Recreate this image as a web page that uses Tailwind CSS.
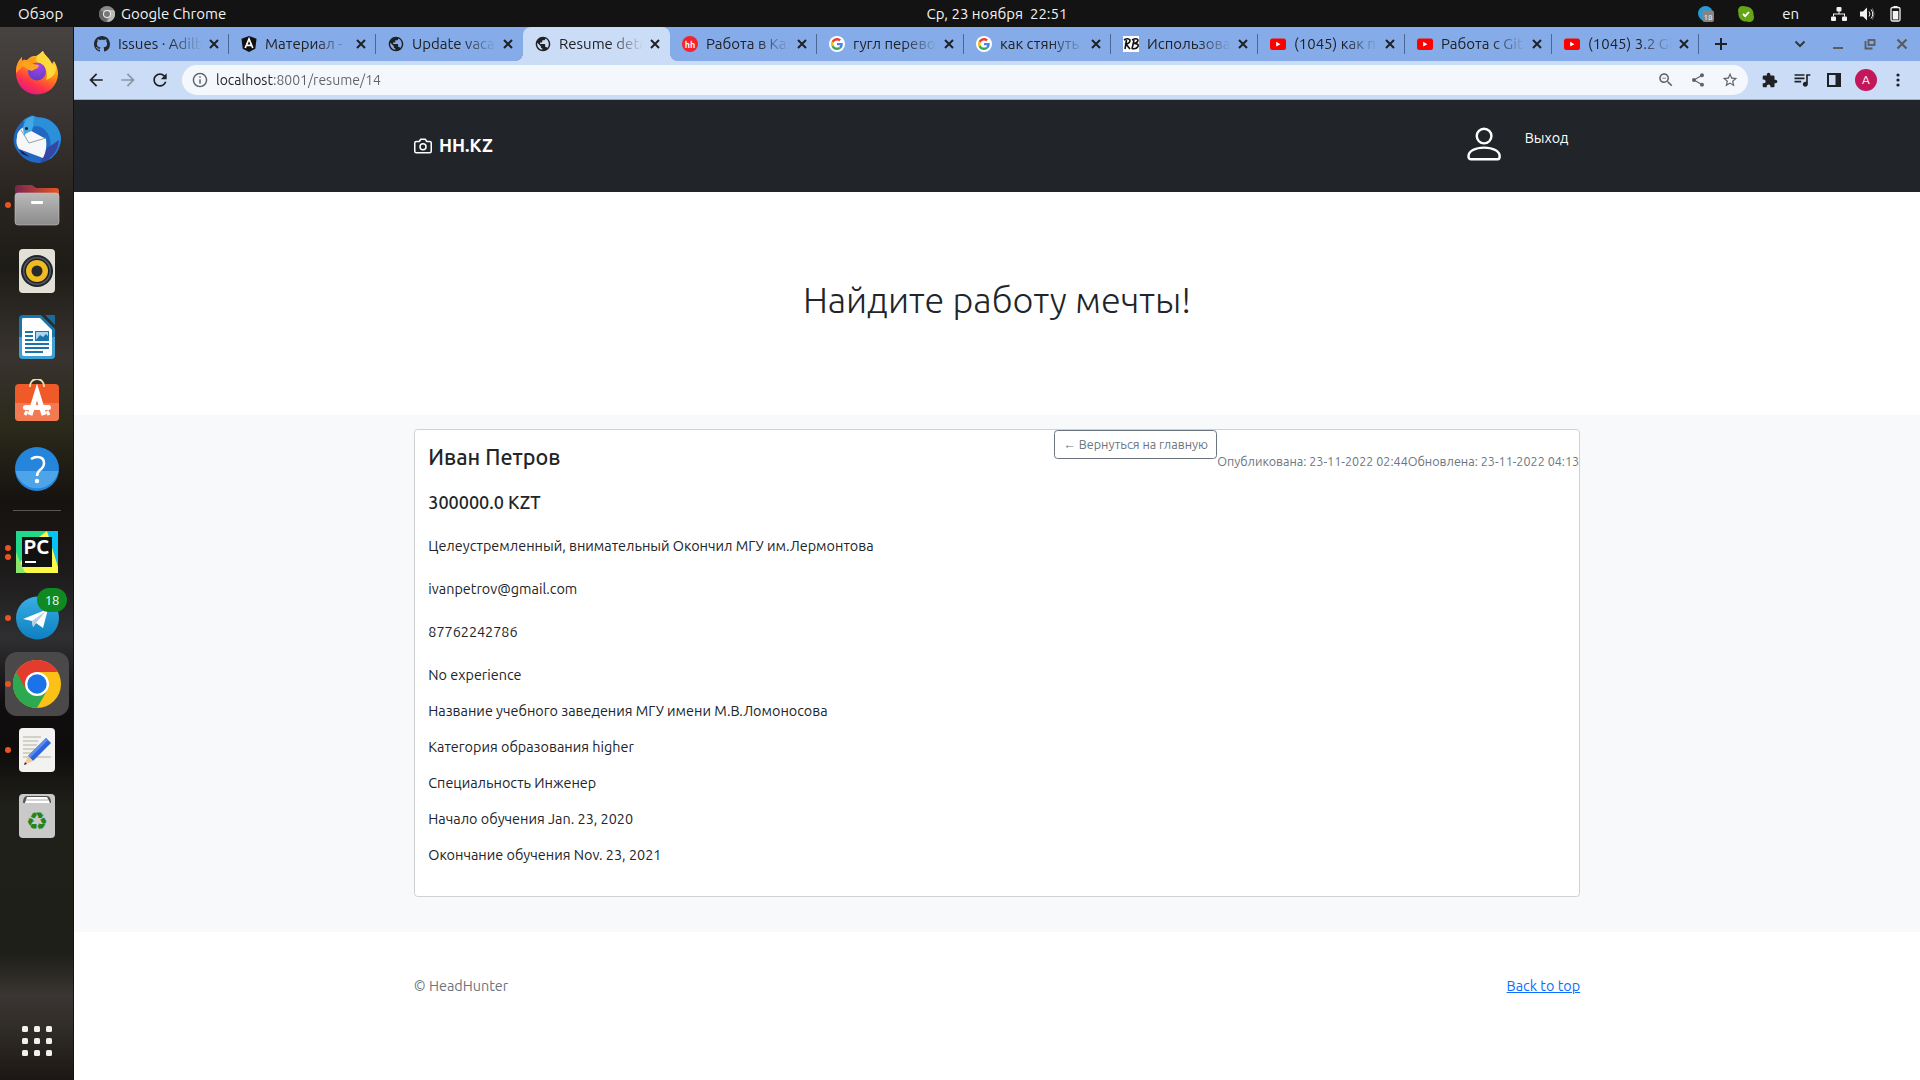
<!DOCTYPE html>
<html lang="ru">
<head>
<meta charset="utf-8">
<title>Resume detail</title>
<script src="https://cdn.jsdelivr.net/npm/@tailwindcss/browser@4"></script>
</head>
<body class="min-h-screen flex flex-col bg-white text-[#212529] text-sm font-['Ubuntu','Noto_Sans',sans-serif]">

<!-- Shared icon symbols -->
<svg class="hidden" aria-hidden="true">
  <symbol id="x" viewBox="0 0 16 16"><path d="M4 4l8 8M12 4l-8 8" stroke="currentColor" stroke-width="2" fill="none"/></symbol>
  <symbol id="globe" viewBox="1 1 22 22"><path fill="#202124" d="M12 2C6.480 2 2 6.480 2 12s4.480 10 10 10 10-4.480 10-10S17.520 2 12 2zm-1 17.930c-3.950-.490-7-3.850-7-7.930 0-.620.080-1.210.210-1.790L9 15v1c0 1.100.900 2 2 2v1.930zm6.900-2.540c-.260-.810-1-1.390-1.900-1.390h-1v-3c0-.550-.450-1-1-1H8v-2h2c.550 0 1-.450 1-1V7h2c1.100 0 2-.900 2-2v-.410c2.930 1.190 5 4.060 5 7.410 0 2.080-.800 3.970-2.100 5.390z"/></symbol>
  <symbol id="google" viewBox="0 0 16 16"><circle cx="8" cy="8" r="8" fill="#fff"/><g transform="translate(2 2) scale(.25)"><path fill="#EA4335" d="M24 9.500c3.540 0 6.710 1.220 9.210 3.600l6.850-6.850C35.900 2.380 30.470 0 24 0 14.620 0 6.510 5.380 2.560 13.220l7.980 6.190C12.430 13.720 17.740 9.500 24 9.500z"/><path fill="#4285F4" d="M46.980 24.550c0-1.570-.150-3.090-.380-4.550H24v9.020h12.940c-.580 2.960-2.260 5.480-4.780 7.180l7.730 6c4.510-4.180 7.090-10.360 7.090-17.650z"/><path fill="#FBBC05" d="M10.530 28.590c-.480-1.450-.760-2.990-.760-4.590s.270-3.140.760-4.590l-7.980-6.190C.920 16.460 0 20.120 0 24c0 3.880.920 7.540 2.560 10.780l7.970-6.190z"/><path fill="#34A853" d="M24 48c6.480 0 11.930-2.130 15.890-5.810l-7.730-6c-2.150 1.450-4.920 2.300-8.160 2.300-6.260 0-11.570-4.220-13.470-9.910l-7.980 6.190C6.510 42.620 14.620 48 24 48z"/></g></symbol>
  <symbol id="youtube" viewBox="0 0 16 16"><rect y="2.500" width="16" height="11.500" rx="2.500" fill="#f00"/><path d="M6.200 5.800v4.800l4.200-2.400z" fill="#fff"/></symbol>
</svg>

<!-- Desktop top bar -->
<header class="h-[27px] shrink-0 bg-[#131313] text-[#f2f2f2] text-[15px] leading-5 flex items-center">
  <button class="w-[74px] shrink-0 pl-[18px] text-left">Обзор</button>
  <div class="flex-1 grid grid-cols-[1fr_auto_1fr] items-center">
    <button class="flex items-center gap-1.5 pl-[25px]">
      <svg class="size-4" viewBox="0 0 16 16"><circle cx="8" cy="8" r="8" fill="#8a8a8a"/><path d="M8 8L1 4A8 8 0 0 0 7.500 16z" fill="#666"/><path d="M8 4h7A8 8 0 0 1 8 16L12 9z" fill="#b9b9b9"/><circle cx="8" cy="8" r="4" fill="#eee"/><circle cx="8" cy="8" r="3" fill="#777"/></svg>
      Google Chrome
    </button>
    <time>Ср, 23 ноября&nbsp; 22:51</time>
    <div class="flex items-center justify-end pr-[17px]">
      <svg class="size-4" viewBox="0 0 16 16"><circle cx="7.500" cy="7.500" r="7.500" fill="#2a9ad6"/><rect x="4.500" y="4.500" width="11.500" height="11.500" rx="2" fill="#858585"/><text x="5.500" y="13.500" font-size="8" fill="#fff">18</text></svg>
      <svg class="size-4 ml-6" viewBox="0 0 16 16"><path d="M4.500 0Q7 0 8 .5A7.500 7.500 0 0 1 15.500 9Q16 10 16 11.500A4.500 4.500 0 0 1 11.500 16Q10 16 9 15.500A7.500 7.500 0 0 1 .5 7Q0 6 0 4.500A4.500 4.500 0 0 1 4.500 0z" fill="#65a617"/><path d="M5 8l2.200 2.200L11 6" stroke="#fff" stroke-width="1.800" fill="none"/></svg>
      <button class="ml-7">en</button>
      <svg class="size-4 ml-8" viewBox="0 0 16 16" fill="#f2f2f2"><rect x="5.500" y="1" width="5" height="4.500" rx="1"/><rect x="0" y="10.500" width="5" height="4.500" rx="1"/><rect x="11" y="10.500" width="5" height="4.500" rx="1"/><path d="M7.500 5v2.500h-5.500v3h1v-2h10v2h1v-3h-5.500v-2.500z"/></svg>
      <svg class="size-4 ml-3" viewBox="0 0 16 16"><path d="M1 5.500h3l4-4v13l-4-4h-3z" fill="#f2f2f2"/><path d="M10 5.500q2 2.500 0 5M12 3.500q3.500 4.500 0 9" stroke="#f2f2f2" fill="none"/><path d="M13.500 2.500q3 5.500 0 11" stroke="#777" fill="none"/></svg>
      <svg class="size-4 ml-3" viewBox="0 0 16 16"><rect x="4" y="1.500" width="9" height="13.500" rx="1.500" fill="none" stroke="#f2f2f2" stroke-width="1.300"/><path d="M6.500 0h4v2h-4zM5.700 5h5.600v8.500H5.700z" fill="#f2f2f2"/></svg>
    </div>
  </div>
</header>

<div class="flex-1 flex">

<!-- Dock -->
<nav aria-label="Dock" class="w-[74px] shrink-0 flex flex-col items-center pt-[13px] pb-[6px] border-r border-[#15120f] bg-[linear-gradient(to_bottom,#474341_0%,#3b3633_8%,#29241f_16%,#1e1c17_23%,#38332f_31%,#2b2a1b_38%,#16120f_45%,#1d1b1b_52%,#2f2f32_58%,#100e0e_64%,#0f0d0c_69%,#20201a_74%,#1f1f19_88%,#3a3533_92%,#302c28_95%,#1c1714_100%)]">
  <button aria-label="Firefox" class="w-full h-[66px] flex items-center justify-center"><svg class="size-12" viewBox="0 2 48 48"><defs><linearGradient id="ff" x1=".8" y1="0" x2=".3" y2="1"><stop offset="0" stop-color="#fff44f"/><stop offset=".4" stop-color="#ff980e"/><stop offset=".75" stop-color="#ff3647"/><stop offset="1" stop-color="#e31587"/></linearGradient><radialGradient id="fp" cx=".6" cy=".2" r=".9"><stop offset="0" stop-color="#a641f0"/><stop offset="1" stop-color="#5a3fc0"/></radialGradient></defs><path d="M30 4c1 4 7 8 9 13l2-3c3 5 4 9 4 13A21 21 0 0 1 3 26c0-6 1-11 6-16v4c2-2 3-1 5-1 4-4 6-4 9-4 2-1 5-3 7-5z" fill="url(#ff)"/><path d="M9 10C4 15 3 20 3 26l6-6 12-3 2-8-9 4c-2 0-3-1-5 1z" fill="#ff9a1c"/><path d="M30 4c-6 4-7 8-6 11 8 3 12 11 9 18 7-2 12-8 9-16-1 2-2 1-3 0-2-6-8-9-9-13z" fill="#ffd93b"/><circle cx="24" cy="24.500" r="9" fill="url(#fp)"/><path d="M8 17c4-4 8-2 12 0l6 1c0 4-5 4-7 6-4-1-6-3-11-7z" fill="#ffa41c"/></svg></button>
  <button aria-label="Thunderbird" class="w-full h-[66px] flex items-center justify-center"><svg class="size-12" viewBox="0 0 48 48"><path d="M17 1c3-1 5 0 7 1 12-1 24 9 24 22 0 10-6 19-15 22l-6 2c-12 0-19-6-24-14C-3 23 3 8 17 1z" fill="#2068c0"/><path d="M28 3c10 0 20 10 20 21-2 8-5 16-11 20 0-10 2-18-2-25s-10-9-17-7l-8-6c4-5 10-5 18-3z" fill="#2b8fda"/><path d="M33 34l13-9c-1 12-8 20-19 23z" fill="#3546a5"/><path d="M4 22c0-5 3-8 7-10l22 12c1 7 0 13-3 19L6 34C3 30 3 26 4 22z" fill="#f6f7f9"/><path d="M8 15l8 13 17-5" stroke="#9aa0a6" fill="none"/><path d="M6 34l11 8-8-3z" fill="#231a52"/><path d="M10 13c1-7 5-12 11-12-1 8 0 10-2 14-2 3-5 1-8 6z" fill="#42a9e4"/><circle cx="13.500" cy="13.500" r="1.500" fill="#123"/></svg></button>
  <button aria-label="Files" class="relative w-full h-[66px] flex items-center justify-center"><i class="absolute left-[5px] size-1.5 rounded-full bg-[#e95420]"></i><svg class="size-12" viewBox="0 0 48 48"><defs><linearGradient id="fo"><stop stop-color="#77264f"/><stop offset="1" stop-color="#e95420"/></linearGradient><linearGradient id="fg" x2="0" y2="1"><stop stop-color="#b9b9b9"/><stop offset="1" stop-color="#8b8b8b"/></linearGradient></defs><path d="M2 7q0-3 3-3h14l4 3h20q3 0 3 3v10H2z" fill="url(#fo)"/><rect x="2" y="12" width="44" height="32" rx="3" fill="url(#fg)" stroke="#c5c5c5" stroke-width=".6"/><rect x="18" y="20" width="12" height="3" rx="1" fill="#fff"/></svg></button>
  <button aria-label="Rhythmbox" class="w-full h-[66px] flex items-center justify-center"><svg class="size-12" viewBox="0 0 48 48"><rect x="6" y="2" width="36" height="44" rx="4" fill="#e3e0d6"/><circle cx="24" cy="24" r="16" fill="#20242c"/><circle cx="24" cy="24" r="14" fill="#555a60"/><circle cx="24" cy="24" r="12.500" fill="#1c1f24"/><circle cx="24" cy="24" r="11" fill="#eebb22"/><circle cx="24" cy="24" r="5.500" fill="#292929"/></svg></button>
  <button aria-label="LibreOffice Writer" class="w-full h-[66px] flex items-center justify-center"><svg class="size-12" viewBox="0 0 48 48"><path d="M10 2h18l14 14v26q0 4-4 4H10q-4 0-4-4V6q0-4 4-4z" fill="#1976ad"/><path d="M6 24h36v18q0 4-4 4H10q-4 0-4-4z" fill="#3fa0d6"/><path d="M10 5h17l12 12v24q0 2-2 2H11q-2 0-2-2V7q0-2 1-2z" fill="#fff"/><path d="M32 2h10v10z" fill="#176c9e"/><path d="M12 19h8M12 23h8M12 27h8M12 31h24M12 35h24M12 39h18" stroke="#1976ad" stroke-width="2"/><rect x="22.500" y="18.500" width="13" height="9" fill="#a9d7f1" stroke="#1976ad"/><path d="M23 27l4-5 3 2 3-3 3 3v3z" fill="#1976ad"/></svg></button>
  <button aria-label="Software" class="w-full h-[66px] flex items-center justify-center"><svg class="size-12" viewBox="0 0 48 48"><rect x="2" y="5" width="44" height="37" rx="4" fill="#ef5a28"/><path d="M2 24h44v14q0 4-4 4H6q-4 0-4-4z" fill="#f37a50"/><path d="M17 8V7a7 7 0 0 1 14 0v1" fill="none" stroke="#f1dfae" stroke-width="1.800"/><path d="M17 36L24 13l7 23" fill="none" stroke="#fff" stroke-width="5"/><rect x="10" y="26" width="28" height="5" rx="2.500" fill="#fff"/><path d="M12 36l2-4M36 36l-2-4" stroke="#fff" stroke-width="3"/></svg></button>
  <button aria-label="Help" class="w-full h-[66px] flex items-center justify-center"><svg class="size-12" viewBox="0 0 48 48"><circle cx="24" cy="24" r="22" fill="#2585db"/><path d="M2.500 26h43a22 22 0 0 1-43 0z" fill="#4da4e8"/><path d="M18 14q3-2 6-2 7 0 7 6 0 4-4 7-3 2.500-3 6" fill="none" stroke="#fff" stroke-width="2.500"/><circle cx="24" cy="36" r="2.200" fill="#fff"/></svg></button>
  <hr class="w-12 my-[8px] border-0 h-px bg-[#5a5754]">
  <button aria-label="PyCharm" class="relative w-full h-[66px] flex items-center justify-center"><span class="absolute left-[5px] flex flex-col gap-[3px]"><i class="size-1.5 rounded-full bg-[#e95420]"></i><i class="size-1.5 rounded-full bg-[#e95420]"></i></span><svg class="size-12" viewBox="0 0 48 48"><rect x="3" y="3" width="42" height="42" fill="#21d789"/><path d="M34 3h11v36L34 12z" fill="#07c3f2"/><path d="M26 9l8-6 11 36v6H14L3 40z" fill="#fcf84a"/><path d="M3 45V24l9 21z" fill="#8be46b"/><rect x="9" y="9" width="30" height="30" fill="#111"/><text x="10.500" y="26" font-size="20" font-weight="700" fill="#fff">PC</text><path d="M12 34h11" stroke="#fff" stroke-width="2"/></svg></button>
  <button aria-label="Telegram" class="relative w-full h-[66px] flex items-center justify-center"><i class="absolute left-[5px] size-1.5 rounded-full bg-[#e95420]"></i><svg class="size-12" viewBox="0 0 48 48"><defs><linearGradient id="tg" x2="0" y2="1"><stop stop-color="#37aee2"/><stop offset="1" stop-color="#0f7fc0"/></linearGradient></defs><circle cx="24.500" cy="24" r="21.500" fill="url(#tg)"/><path d="M10 25l25-10-5 19-7-5-3 4-1-6-9-2z" fill="#fff"/><path d="M19 27l14-10-10 12-3 4z" fill="#b5cfe4"/></svg><span class="absolute left-[37px] top-[3px] w-[30px] h-6 rounded-full bg-[#0f8a22] text-white text-[13px] leading-6 text-center">18</span></button>
  <button aria-label="Google Chrome" class="relative w-full h-[66px] flex items-center justify-center"><span class="size-16 rounded-xl bg-[#4a4848] flex items-center justify-center"><svg class="size-12" viewBox="0 0 48 48"><circle cx="24" cy="24" r="24" fill="#fbc116"/><path d="M24 24L3.200 12A24 24 0 0 0 24 48l10.400-18z" fill="#2da94f"/><path d="M3.200 12A24 24 0 0 1 44.800 12H24L13.600 30z" fill="#e33b2e"/><circle cx="24" cy="24" r="12" fill="#fff"/><circle cx="24" cy="24" r="9.700" fill="#1a73e8"/></svg></span><i class="absolute left-[5px] size-1.5 rounded-full bg-[#e95420]"></i></button>
  <button aria-label="Text editor" class="relative w-full h-[66px] flex items-center justify-center"><i class="absolute left-[5px] size-1.5 rounded-full bg-[#e95420]"></i><svg class="size-12" viewBox="0 0 48 48"><rect x="6" y="2" width="36" height="44" rx="4" fill="#f2f2f0"/><path d="M10 11h18M10 15h15M10 19h14M10 23h12M10 27h10M10 31h28" stroke="#c9c6b8" stroke-width="1.600"/><path d="M15 30L33 12l5 5-18 18z" fill="#2f63d8"/><path d="M15 30l18-18 2 2-18 18z" fill="#5c8cf0"/><path d="M15 30l5 5-9 4z" fill="#f6c79b"/><path d="M12 36l2 2-3 1z" fill="#333"/></svg></button>
  <button aria-label="Trash" class="w-full h-[66px] flex items-center justify-center"><svg class="size-12" viewBox="0 0 48 48"><rect x="6" y="2" width="36" height="44" rx="4" fill="#c9c9c9"/><path d="M10 11q0-7 4-7h20q4 0 4 7z" fill="#555"/><path d="M12 11l2-6h20l3 6z" fill="#fff"/><path d="M13 8h22" stroke="#aaa"/><text x="24" y="38" text-anchor="middle" font-size="25" font-family="DejaVu Sans" fill="#25851b">♻</text></svg></button>
  <button aria-label="Show applications" class="mt-auto w-full h-[66px] flex items-center justify-center"><svg class="size-[30px]" viewBox="0 0 30 30" fill="#f0f0ee"><rect width="6" height="6" rx="1.500"/><rect x="12" width="6" height="6" rx="1.500"/><rect x="24" width="6" height="6" rx="1.500"/><rect y="12" width="6" height="6" rx="1.500"/><rect x="12" y="12" width="6" height="6" rx="1.500"/><rect x="24" y="12" width="6" height="6" rx="1.500"/><rect y="24" width="6" height="6" rx="1.500"/><rect x="12" y="24" width="6" height="6" rx="1.500"/><rect x="24" y="24" width="6" height="6" rx="1.500"/></svg></button>
</nav>

<!-- Browser window -->
<div class="flex-1 min-w-0 flex flex-col">
  <!-- Tab strip -->
  <div class="h-[34px] bg-[#85ace9] text-[#202124] text-[15px] leading-5 flex items-center pl-2 pr-[10px]">
    <div class="w-[147px] h-[34px] flex items-center pl-3 pr-[7px]"><svg class="size-4 shrink-0" viewBox="0 0 16 16"><path fill="#24292f" d="M8 0C3.580 0 0 3.580 0 8c0 3.540 2.290 6.530 5.470 7.590.400.070.550-.170.550-.380 0-.190-.010-.820-.010-1.490-2.010.370-2.530-.490-2.690-.940-.090-.230-.480-.940-.820-1.130-.280-.150-.680-.520-.010-.530.630-.010 1.080.580 1.230.820.720 1.210 1.870.870 2.330.660.070-.520.280-.870.510-1.070-1.780-.200-3.640-.890-3.640-3.950 0-.870.310-1.590.820-2.150-.080-.200-.360-1.020.080-2.120 0 0 .670-.210 2.200.820.640-.180 1.320-.270 2-.270s1.360.090 2 .270c1.530-1.040 2.200-.820 2.200-.820.440 1.100.160 1.920.080 2.120.510.560.820 1.270.820 2.150 0 3.070-1.870 3.750-3.650 3.950.290.250.540.730.540 1.480 0 1.070-.010 1.930-.010 2.200 0 .210.150.460.550.380A8.010 8.010 0 0 0 16 8c0-4.420-3.580-8-8-8z"/></svg><a href="#" class="ml-2 flex-1 min-w-0 overflow-hidden whitespace-nowrap [mask-image:linear-gradient(to_right,black_60%,transparent)]">Issues · Adilb</a><button aria-label="Закрыть" class="ml-1"><svg class="size-4"><use href="#x"/></svg></button></div>
    <div class="w-px h-5 -ml-px bg-[#4b6796]"></div>
    <div class="w-[147px] h-[34px] flex items-center pl-3 pr-[7px]"><svg class="size-4 shrink-0" viewBox="0 0 16 16"><path d="M8 0l7.500 2.700-1.200 10L8 16l-6.300-3.300-1.200-10z" fill="#111"/><path d="M4.200 12L8 3l3.800 9M5.800 9.300h4.400" stroke="#fff" stroke-width="1.700" fill="none"/></svg><a href="#" class="ml-2 flex-1 min-w-0 overflow-hidden whitespace-nowrap [mask-image:linear-gradient(to_right,black_60%,transparent)]">Материал - З</a><button aria-label="Закрыть" class="ml-1"><svg class="size-4"><use href="#x"/></svg></button></div>
    <div class="w-px h-5 -ml-px bg-[#4b6796]"></div>
    <div class="w-[147px] h-[34px] flex items-center pl-3 pr-[7px]"><svg class="size-4 shrink-0"><use href="#globe"/></svg><a href="#" class="ml-2 flex-1 min-w-0 overflow-hidden whitespace-nowrap [mask-image:linear-gradient(to_right,black_60%,transparent)]">Update vacan</a><button aria-label="Закрыть" class="ml-1"><svg class="size-4"><use href="#x"/></svg></button></div>
    <div class="w-2 h-[34px] -ml-2 bg-[radial-gradient(circle_at_0_26px,transparent_8px,#cbdcf6_8px)] [clip-path:inset(26px_0_0_0)]"></div>
    <div class="w-[147px] h-[34px] flex items-center pl-3 pr-[7px] bg-[#cbdcf6] rounded-t-lg"><svg class="size-4 shrink-0"><use href="#globe"/></svg><a href="#" aria-current="page" class="ml-2 flex-1 min-w-0 overflow-hidden whitespace-nowrap [mask-image:linear-gradient(to_right,black_60%,transparent)]">Resume detai</a><button aria-label="Закрыть" class="ml-1"><svg class="size-4"><use href="#x"/></svg></button></div>
    <div class="w-2 h-[34px] -mr-2 bg-[radial-gradient(circle_at_8px_26px,transparent_8px,#cbdcf6_8px)] [clip-path:inset(26px_0_0_0)]"></div>
    <div class="w-[147px] h-[34px] flex items-center pl-3 pr-[7px]"><svg class="size-4 shrink-0" viewBox="0 0 16 16"><circle cx="8" cy="8" r="8" fill="#f5222d"/><text x="8" y="11.500" text-anchor="middle" font-size="9" font-weight="700" fill="#fff">hh</text></svg><a href="#" class="ml-2 flex-1 min-w-0 overflow-hidden whitespace-nowrap [mask-image:linear-gradient(to_right,black_60%,transparent)]">Работа в Каз</a><button aria-label="Закрыть" class="ml-1"><svg class="size-4"><use href="#x"/></svg></button></div>
    <div class="w-px h-5 -ml-px bg-[#4b6796]"></div>
    <div class="w-[147px] h-[34px] flex items-center pl-3 pr-[7px]"><svg class="size-4 shrink-0"><use href="#google"/></svg><a href="#" class="ml-2 flex-1 min-w-0 overflow-hidden whitespace-nowrap [mask-image:linear-gradient(to_right,black_60%,transparent)]">гугл перевод</a><button aria-label="Закрыть" class="ml-1"><svg class="size-4"><use href="#x"/></svg></button></div>
    <div class="w-px h-5 -ml-px bg-[#4b6796]"></div>
    <div class="w-[147px] h-[34px] flex items-center pl-3 pr-[7px]"><svg class="size-4 shrink-0"><use href="#google"/></svg><a href="#" class="ml-2 flex-1 min-w-0 overflow-hidden whitespace-nowrap [mask-image:linear-gradient(to_right,black_60%,transparent)]">как стянуть</a><button aria-label="Закрыть" class="ml-1"><svg class="size-4"><use href="#x"/></svg></button></div>
    <div class="w-px h-5 -ml-px bg-[#4b6796]"></div>
    <div class="w-[147px] h-[34px] flex items-center pl-3 pr-[7px]"><svg class="size-4 shrink-0" viewBox="0 0 16 16"><rect width="16" height="16" fill="#fff"/><path d="M1 4q4-2.500 6 0 0 3.500-4 4l4 5M3.500 4L2 13M9 4q5-2.500 6 0 0 2.500-4 3.500 5 0 4 3-2 3-6 2M11 4L9 13" fill="none" stroke="#111" stroke-width="1.600"/></svg><a href="#" class="ml-2 flex-1 min-w-0 overflow-hidden whitespace-nowrap [mask-image:linear-gradient(to_right,black_60%,transparent)]">Использова</a><button aria-label="Закрыть" class="ml-1"><svg class="size-4"><use href="#x"/></svg></button></div>
    <div class="w-px h-5 -ml-px bg-[#4b6796]"></div>
    <div class="w-[147px] h-[34px] flex items-center pl-3 pr-[7px]"><svg class="size-4 shrink-0"><use href="#youtube"/></svg><a href="#" class="ml-2 flex-1 min-w-0 overflow-hidden whitespace-nowrap [mask-image:linear-gradient(to_right,black_60%,transparent)]">(1045) как по</a><button aria-label="Закрыть" class="ml-1"><svg class="size-4"><use href="#x"/></svg></button></div>
    <div class="w-px h-5 -ml-px bg-[#4b6796]"></div>
    <div class="w-[147px] h-[34px] flex items-center pl-3 pr-[7px]"><svg class="size-4 shrink-0"><use href="#youtube"/></svg><a href="#" class="ml-2 flex-1 min-w-0 overflow-hidden whitespace-nowrap [mask-image:linear-gradient(to_right,black_60%,transparent)]">Работа с Git</a><button aria-label="Закрыть" class="ml-1"><svg class="size-4"><use href="#x"/></svg></button></div>
    <div class="w-px h-5 -ml-px bg-[#4b6796]"></div>
    <div class="w-[147px] h-[34px] flex items-center pl-3 pr-[7px]"><svg class="size-4 shrink-0"><use href="#youtube"/></svg><a href="#" class="ml-2 flex-1 min-w-0 overflow-hidden whitespace-nowrap [mask-image:linear-gradient(to_right,black_60%,transparent)]">(1045) 3.2 Gi</a><button aria-label="Закрыть" class="ml-1"><svg class="size-4"><use href="#x"/></svg></button></div>
    <div class="w-px h-5 -ml-px bg-[#4b6796]"></div>
    <button aria-label="Новая вкладка" class="ml-[14px]"><svg class="size-4" viewBox="0 0 16 16"><path d="M8 2v12M2 8h12" stroke="#202124" stroke-width="2"/></svg></button>
    <div class="ml-auto flex items-center text-[#5b5b5b]">
      <button aria-label="Поиск вкладок"><svg class="size-4" viewBox="0 0 16 16"><path d="M3.500 5.500L8 10l4.500-4.500" stroke="#33373c" stroke-width="2" fill="none"/></svg></button>
      <button aria-label="Свернуть" class="ml-[22px]"><svg class="size-4" viewBox="0 0 16 16"><path d="M3 12h10" stroke="currentColor" stroke-width="2"/></svg></button>
      <button aria-label="Восстановить" class="ml-4"><svg class="size-4" viewBox="0 0 16 16" fill="none" stroke="currentColor" stroke-width="1.800"><rect x="6.500" y="4" width="6" height="5"/><path d="M3.500 5v7.500h7"/></svg></button>
      <button aria-label="Закрыть окно" class="ml-4"><svg class="size-4" viewBox="0 0 16 16"><path d="M3.500 3.500l9 9M12.500 3.500l-9 9" stroke="currentColor" stroke-width="2.200"/></svg></button>
    </div>
  </div>

  <!-- Toolbar -->
  <div class="h-[39px] bg-[#cbdcf6] border-b border-[#9fb0cb] flex items-center pl-1.5 pr-1.5 text-[#202124]">
    <button aria-label="Назад" class="w-8 flex justify-center"><svg class="size-5" viewBox="0 0 24 24"><path fill="currentColor" d="M20 11H7.830l5.590-5.590L12 4l-8 8 8 8 1.410-1.410L7.830 13H20v-2z"/></svg></button>
    <button aria-label="Вперёд" class="w-8 flex justify-center text-[#8b95a5]"><svg class="size-5" viewBox="0 0 24 24"><path fill="currentColor" d="M12 4l-1.410 1.410L16.170 11H4v2h12.170l-5.580 5.590L12 20l8-8z"/></svg></button>
    <button aria-label="Обновить" class="w-8 flex justify-center"><svg class="size-5" viewBox="0 0 24 24"><path fill="currentColor" d="M17.650 6.350C16.200 4.900 14.210 4 12 4c-4.420 0-7.990 3.580-7.990 8s3.570 8 7.990 8c3.730 0 6.840-2.550 7.730-6h-2.080c-.820 2.330-3.040 4-5.650 4-3.310 0-6-2.690-6-6s2.690-6 6-6c1.660 0 3.140.690 4.220 1.780L13 11h7V4l-2.350 2.350z"/></svg></button>
    <div class="mx-1.5 flex-1 h-[30px] rounded-full bg-[#f4f8fd] flex items-center pl-2.5 pr-0.5 text-[#5f6368]">
      <svg class="size-4 shrink-0" viewBox="1 1 22 22"><path fill="currentColor" d="M11 7h2v2h-2zm0 4h2v6h-2zm1-9C6.480 2 2 6.480 2 12s4.480 10 10 10 10-4.480 10-10S17.520 2 12 2zm0 18c-4.410 0-8-3.590-8-8s3.590-8 8-8 8 3.590 8 8-3.590 8-8 8z"/></svg>
      <input type="text" aria-label="Адресная строка" value="localhost:8001/resume/14" class="ml-2 flex-1 min-w-0 outline-none text-transparent bg-clip-text bg-[linear-gradient(to_right,#202124_57px,#5f6368_57px)]">
      <button aria-label="Масштаб" class="w-8 flex justify-center"><svg class="size-[18px]" viewBox="0 0 24 24"><path fill="currentColor" d="M15.500 14h-.790l-.280-.270C15.410 12.590 16 11.110 16 9.500 16 5.910 13.090 3 9.500 3S3 5.910 3 9.500 5.910 16 9.500 16c1.610 0 3.090-.590 4.230-1.570l.270.280v.790l5 4.990L20.490 19l-4.990-5zm-6 0C7.010 14 5 11.990 5 9.500S7.010 5 9.500 5 14 7.010 14 9.500 11.990 14 9.500 14zM7 9h5v1H7z"/></svg></button>
      <button aria-label="Поделиться" class="w-8 flex justify-center"><svg class="size-4" viewBox="0 0 24 24"><path fill="currentColor" d="M18 16.080c-.760 0-1.440.300-1.960.770L8.910 12.700c.050-.230.090-.460.090-.700s-.040-.470-.090-.700l7.050-4.110c.540.500 1.250.810 2.040.810 1.660 0 3-1.340 3-3s-1.340-3-3-3-3 1.340-3 3c0 .240.040.470.090.700L8.040 9.810C7.500 9.310 6.790 9 6 9c-1.660 0-3 1.340-3 3s1.340 3 3 3c.790 0 1.500-.310 2.040-.810l7.120 4.160c-.050.210-.080.430-.080.650 0 1.610 1.310 2.920 2.920 2.920s2.920-1.310 2.920-2.920-1.310-2.920-2.920-2.920z"/></svg></button>
      <button aria-label="В закладки" class="w-8 flex justify-center"><svg class="size-4" viewBox="1 1 22 22"><path fill="currentColor" d="M22 9.240l-7.190-.620L12 2 9.190 8.630 2 9.240l5.460 4.730L5.820 21 12 17.270 18.180 21l-1.630-7.030L22 9.240zM12 15.400l-3.760 2.270 1-4.280-3.320-2.880 4.380-.380L12 6.100l1.710 4.040 4.380.380-3.320 2.880 1 4.280L12 15.400z"/></svg></button>
    </div>
    <button aria-label="Расширения" class="w-8 flex justify-center"><svg class="size-4" viewBox="1 0 23 23"><path fill="currentColor" d="M20.500 11H19V7c0-1.100-.900-2-2-2h-4V3.500C13 2.120 11.880 1 10.500 1S8 2.120 8 3.500V5H4c-1.100 0-1.990.900-1.990 2v3.800H3.500c1.490 0 2.700 1.210 2.700 2.700s-1.210 2.700-2.700 2.700H2V20c0 1.100.900 2 2 2h3.800v-1.500c0-1.490 1.210-2.700 2.700-2.700 1.490 0 2.700 1.210 2.700 2.700V22H17c1.100 0 2-.900 2-2v-4h1.500c1.380 0 2.500-1.120 2.500-2.500S21.880 11 20.500 11z"/></svg></button>
    <button aria-label="Медиа" class="w-8 flex justify-center"><svg class="size-5" viewBox="0 0 24 24"><path fill="currentColor" d="M15 5H3v2h12V5zm0 4H3v2h12V9zM3 15h8v-2H3v2zM17 5v9.180c-.310-.110-.650-.180-1-.180-1.660 0-3 1.340-3 3s1.340 3 3 3 3-1.340 3-3V7h3V5h-5z"/></svg></button>
    <button aria-label="Боковая панель" class="w-8 flex justify-center"><svg class="size-[14px]" viewBox="0 0 14 14"><path fill="currentColor" fill-rule="evenodd" d="M0 0h14v14H0zM2 2v10h6.500V2z"/></svg></button>
    <button aria-label="Профиль" class="w-8 flex justify-center"><span class="size-[22px] rounded-full bg-[#c2185b] text-white text-xs leading-[22px] text-center">A</span></button>
    <button aria-label="Меню" class="w-8 flex justify-center"><svg class="size-4" viewBox="0 0 16 16" fill="currentColor"><circle cx="8" cy="3" r="1.600"/><circle cx="8" cy="8" r="1.600"/><circle cx="8" cy="13" r="1.600"/></svg></button>
  </div>

  <!-- Site, shown at the browser's 90% page zoom -->
  <div class="[zoom:0.9] text-base">
    <div class="h-[102px] bg-[#212529] text-white">
      <div class="max-w-[1296px] h-full mx-auto flex items-center justify-between">
        <a href="#" class="flex items-center gap-2 text-xl font-bold"><svg class="size-5" viewBox="0 0 24 24" fill="none" stroke="currentColor" stroke-width="2" stroke-linecap="round" stroke-linejoin="round"><path d="M23 19a2 2 0 0 1-2 2H3a2 2 0 0 1-2-2V8a2 2 0 0 1 2-2h4l2-3h6l2 3h4a2 2 0 0 1 2 2z"/><circle cx="12" cy="13" r="4"/></svg>HH.KZ</a>
        <div class="flex items-start gap-[26px] pr-[13px] pb-1">
          <a href="#" aria-label="Профиль"><svg class="size-[38px]" viewBox="0 0 34 34" fill="none" stroke="#fff" stroke-width="2.400"><circle cx="17" cy="9" r="7.300"/><path d="M1.500 29C1.500 24 8 20.500 17 20.500S32.500 24 32.500 29q0 3-2 3h-27q-2 0-2-3z"/></svg></a>
          <a href="#" class="pt-px">Выход</a>
        </div>
      </div>
    </div>

    <!-- Hero -->
    <section class="h-[248px] pb-2 flex items-center justify-center">
      <h1 class="text-[40px] leading-[48px] font-light">Найдите работу мечты!</h1>
    </section>

    <!-- Resume -->
    <main class="bg-[#f8f9fa] pt-4 pb-[39px]">
      <article class="max-w-[1296px] mx-auto bg-white border border-[#d0d1d2] rounded flex items-start justify-between">
        <div class="pl-[15px] pt-[15px] pb-8">
          <h2 class="text-2xl leading-[29px] font-medium">Иван Петров</h2>
          <h3 class="mt-6 text-xl leading-6 font-medium">300000.0 KZT</h3>
          <div class="mt-[25px] flex flex-col gap-6">
            <p>Целеустремленный, внимательный Окончил МГУ им.Лермонтова</p>
            <p>ivanpetrov@gmail.com</p>
            <p>87762242786</p>
            <p>No experience</p>
          </div>
          <div class="mt-4 flex flex-col gap-4">
            <p>Название учебного заведения МГУ имени М.В.Ломоносова</p>
            <p>Категория образования higher</p>
            <p>Специальность Инженер</p>
            <p>Начало обучения Jan. 23, 2020</p>
            <p>Окончание обучения Nov. 23, 2021</p>
          </div>
        </div>
        <div class="flex items-start text-sm text-[#6c757d]">
          <button class="h-8 px-[9px] border border-[#6c757d] rounded">← Вернуться на главную</button>
          <small class="pt-[25px] text-sm">Опубликована: 23-11-2022 02:44</small>
          <small class="pt-[25px] text-sm">Обновлена: 23-11-2022 04:13</small>
        </div>
      </article>
    </main>

    <!-- Footer -->
    <footer class="pt-[49px]">
      <div class="max-w-[1296px] mx-auto flex justify-between text-[#6c757d]">
        <p>© HeadHunter</p>
        <a href="#" class="text-[#0d6efd] underline">Back to top</a>
      </div>
    </footer>
  </div>
</div>
</div>
</body>
</html>
